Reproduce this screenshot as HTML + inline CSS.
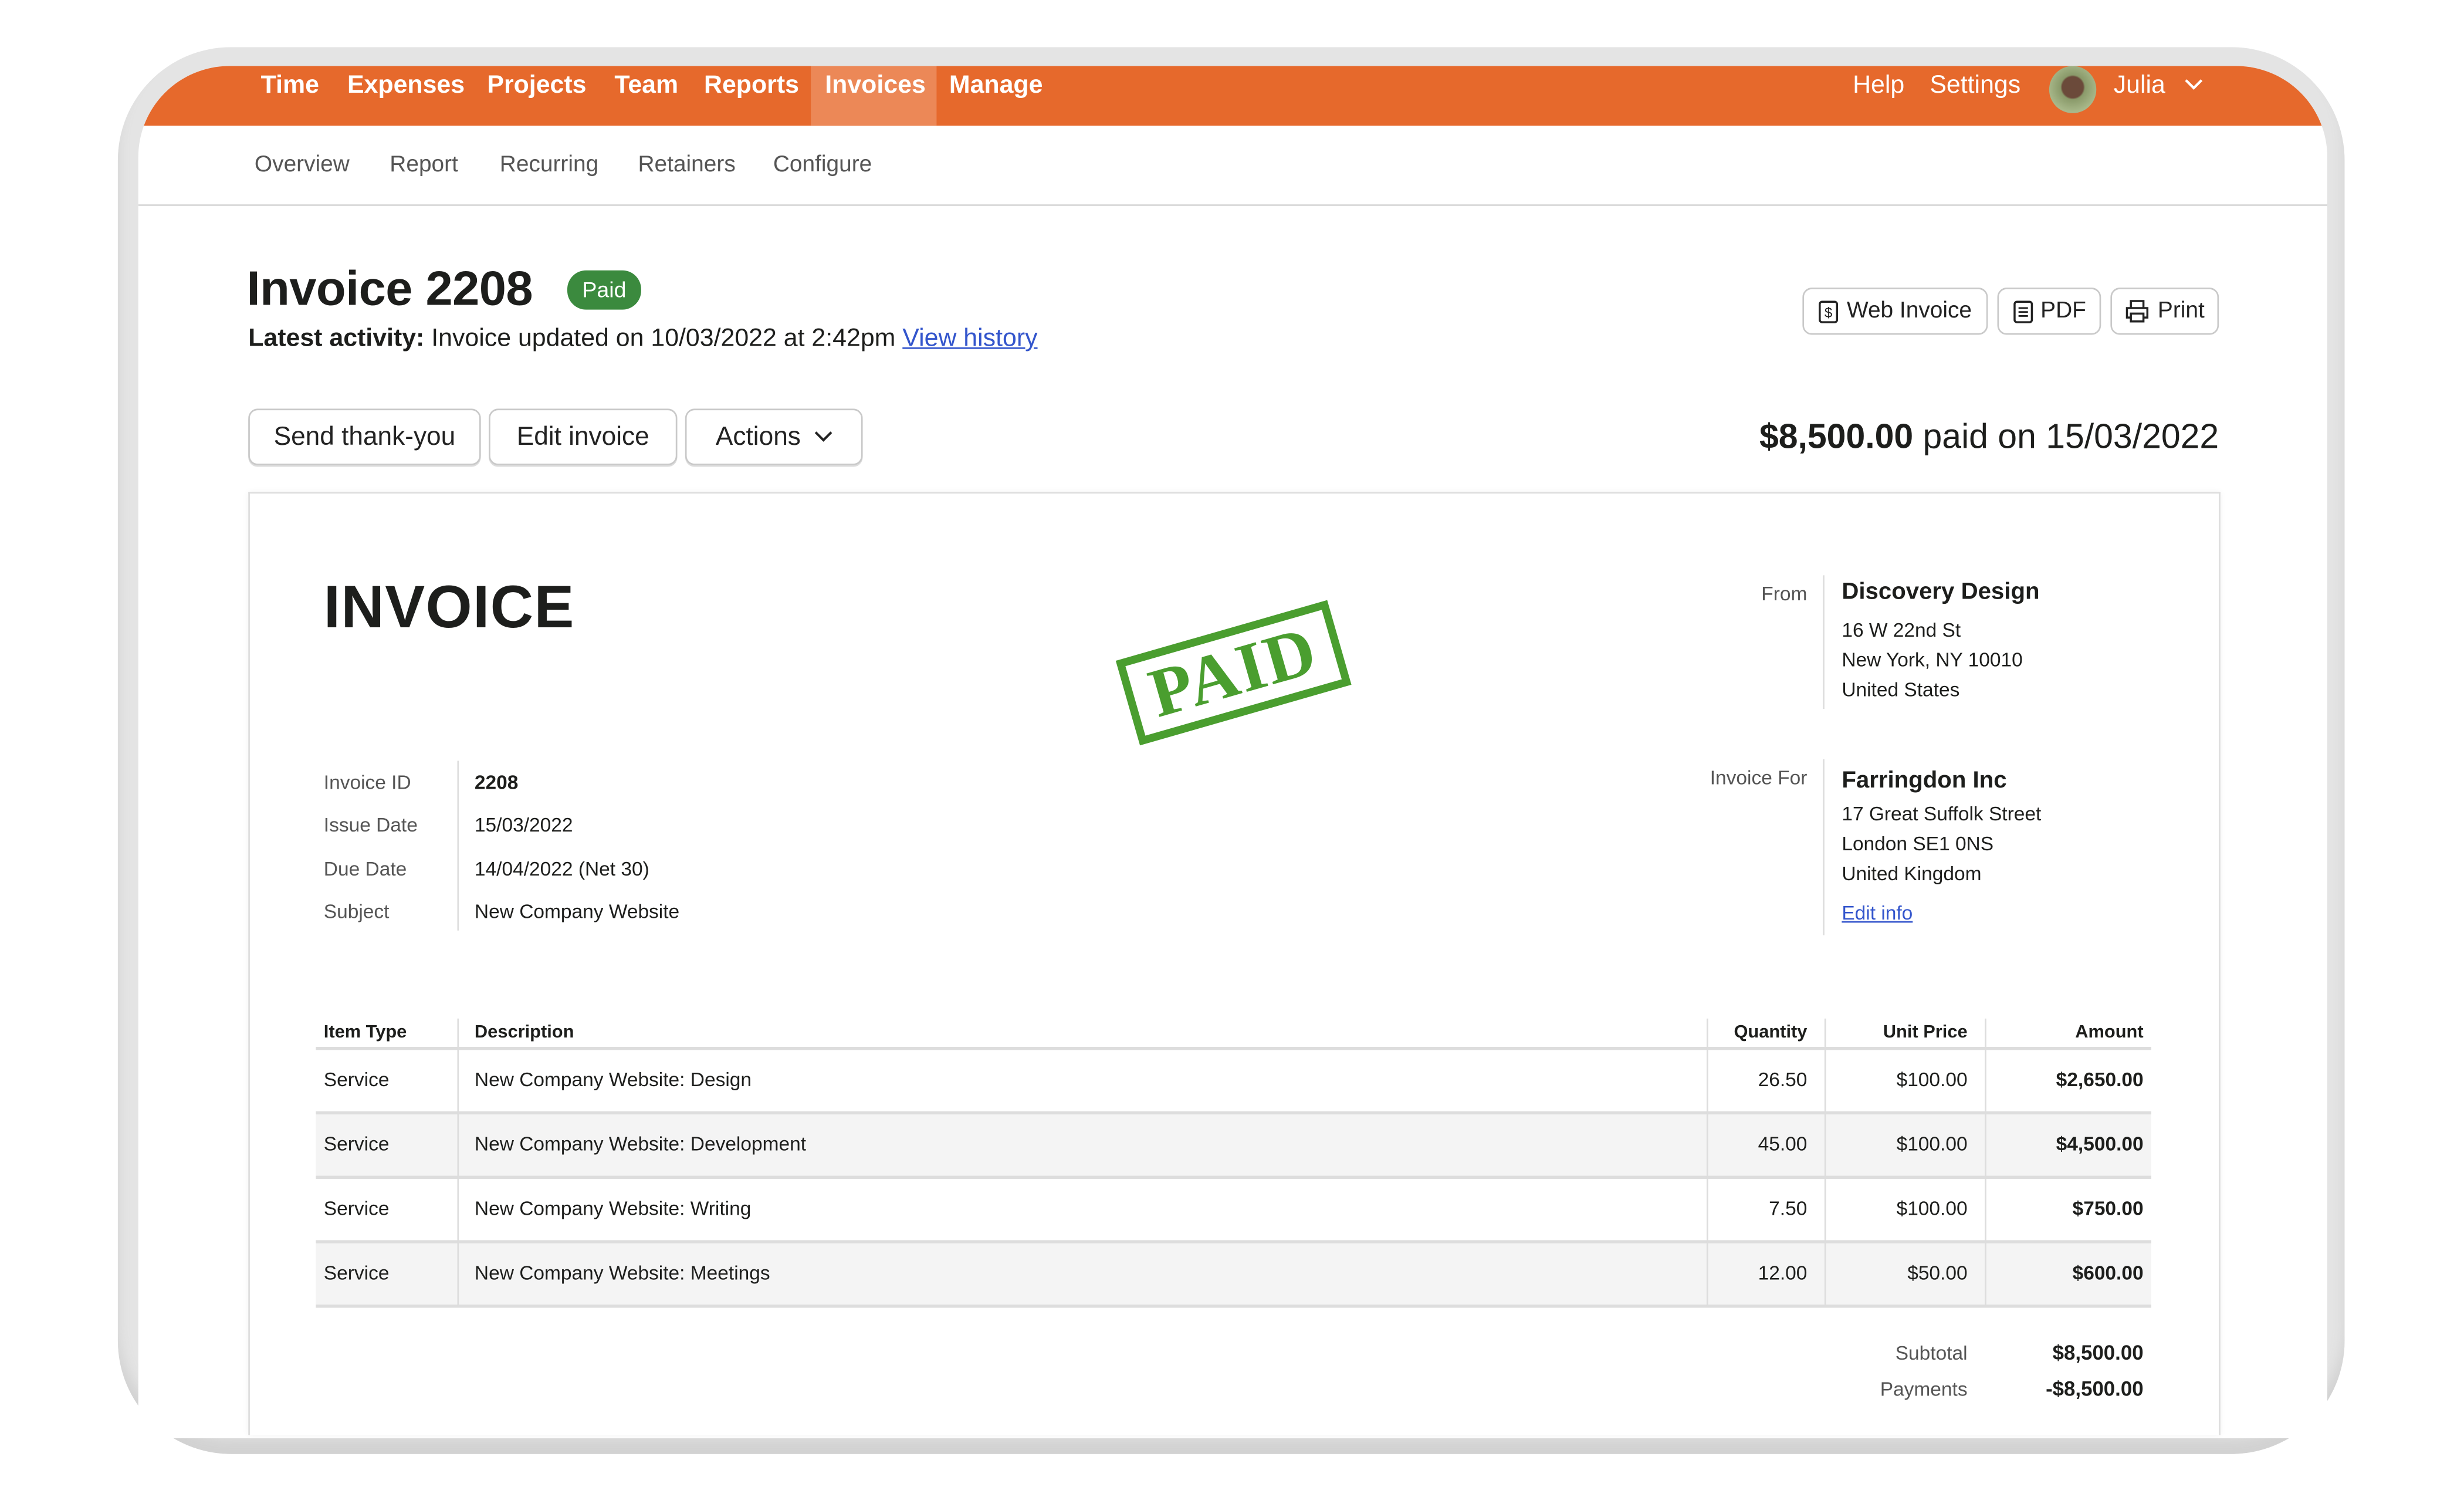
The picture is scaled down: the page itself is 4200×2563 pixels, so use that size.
<!DOCTYPE html>
<html><head><meta charset="utf-8"><style>
*{margin:0;padding:0;box-sizing:border-box}
html,body{width:4200px;height:2562px;overflow:hidden;background:#fff}
#c{position:absolute;left:0;top:0;width:1568px;height:957px;transform:scale(2.6786);transform-origin:0 0;font-family:"Liberation Sans",sans-serif;color:#1d1e1c}
.a{position:absolute;white-space:nowrap}
.bez{position:absolute;left:75px;top:30px;width:1417px;height:895px;border-radius:72px;background:#e4e4e4;box-shadow:inset 0 -10px 8px #d2d2d2}
.scr{position:absolute;left:88px;top:42px;width:1393px;height:873px;border-radius:58px 58px 8px 8px;background:#fff;overflow:hidden}
.hdr{position:absolute;left:0;top:0;width:1393px;height:38px;background:#e6692c}
.nav{position:absolute;top:3px;color:#fff;font-size:16px;font-weight:bold;line-height:20px}
.sub{position:absolute;top:55px;color:#555;font-size:14.5px}
.btn{position:absolute;border:1px solid #c9c9c9;border-radius:6px;background:#fff;font-size:16.5px;color:#222;display:flex;align-items:center;justify-content:center;box-shadow:0 1px 0 #ddd}
.sb{position:absolute;border:1px solid #c9c9c9;border-radius:6px;background:#fff;font-size:14.5px;color:#222;display:flex;align-items:center;justify-content:center;gap:5px}
.lbl{font-size:12.5px;color:#555}
.val{font-size:12.5px;color:#1d1e1c}
.vl{position:absolute;width:1px;background:#ddd}
</style></head><body><div id="c">
<div class="bez"></div>
<div class="scr">
 <div class="hdr">
  <div style="position:absolute;left:428px;top:0;width:80px;height:38px;background:#ec8857"></div>
  <div class="nav" style="left:78px">Time</div>
  <div class="nav" style="left:133px">Expenses</div>
  <div class="nav" style="left:222px">Projects</div>
  <div class="nav" style="left:303px">Team</div>
  <div class="nav" style="left:360px">Reports</div>
  <div class="nav" style="left:437px">Invoices</div>
  <div class="nav" style="left:516px">Manage</div>
  <div class="nav" style="left:1091px;font-weight:normal">Help</div>
  <div class="nav" style="left:1140px;font-weight:normal">Settings</div>
  <div style="position:absolute;left:1216px;top:0px;width:30px;height:30px;border-radius:50%;background:radial-gradient(circle at 50% 45%,#6b4a3a 0 30%,#8a9a6a 35%,#a8b88a 70%,#9cb0c0 100%)"></div>
  <div class="nav" style="left:1257px;font-weight:normal">Julia</div>
  <svg class="a" style="left:1302px;top:8px" width="12" height="8" viewBox="0 0 12 8"><path d="M1 1l5 5 5-5" fill="none" stroke="#fff" stroke-width="1.6"/></svg>
 </div>
 <div class="sub" style="left:74px">Overview</div>
 <div class="sub" style="left:160px">Report</div>
 <div class="sub" style="left:230px">Recurring</div>
 <div class="sub" style="left:318px">Retainers</div>
 <div class="sub" style="left:404px">Configure</div>
 <div style="position:absolute;left:0;top:88px;width:1393px;height:1px;background:#d8d8d8"></div>
</div>
<div class="a" style="left:157px;top:166px;font-size:31px;font-weight:bold;letter-spacing:-0.2px">Invoice 2208</div>
<div class="a" style="left:361px;top:172px;width:47px;height:25px;border-radius:12px;background:#3b8a3e;color:#fff;font-size:14px;line-height:25px;text-align:center">Paid</div>
<div class="a" style="left:158px;top:207px;font-size:16px"><b>Latest activity:</b> Invoice updated on 10/03/2022 at 2:42pm <span style="color:#3355cc;text-decoration:underline">View history</span></div>
<div class="sb" style="left:1147px;top:183px;width:118px;height:30px"><svg width="13" height="15" viewBox="0 0 13 15"><rect x="1" y="1" width="11" height="13" rx="1.5" fill="none" stroke="#222" stroke-width="1.3"/><text x="6.5" y="11" font-size="9" text-anchor="middle" font-family="Liberation Sans" fill="#222">$</text></svg>Web Invoice</div>
<div class="sb" style="left:1271px;top:183px;width:66px;height:30px"><svg width="13" height="15" viewBox="0 0 13 15"><rect x="1" y="1" width="11" height="13" rx="1.5" fill="none" stroke="#222" stroke-width="1.3"/><path d="M3.5 5h6M3.5 7.5h6M3.5 10h6" stroke="#222" stroke-width="1.1"/></svg>PDF</div>
<div class="sb" style="left:1343px;top:183px;width:69px;height:30px"><svg width="16" height="16" viewBox="0 0 16 16"><path d="M4 6V1.5h8V6M4 12H1.5V6h13v6H12M4 9.5h8v5H4z" fill="none" stroke="#222" stroke-width="1.3"/></svg>Print</div>
<div class="btn" style="left:158px;top:260px;width:148px;height:36px">Send thank-you</div>
<div class="btn" style="left:311px;top:260px;width:120px;height:36px">Edit invoice</div>
<div class="btn" style="left:436px;top:260px;width:113px;height:36px">Actions <svg style="margin-left:8px" width="12" height="8" viewBox="0 0 12 8"><path d="M1 1l5 5 5-5" fill="none" stroke="#222" stroke-width="1.5"/></svg></div>
<div class="a" style="right:156px;top:265px;font-size:22px"><b style="font-weight:600">$8,500.00</b> paid on 15/03/2022</div>
<div class="a" style="left:158px;top:313px;width:1255px;height:600px;border:1px solid #ddd;border-bottom:none;box-shadow:0 0 4px rgba(0,0,0,.05)"></div>
<div class="a" style="left:206px;top:366px;font-size:38px;font-weight:bold;letter-spacing:0.5px">INVOICE</div>
<div class="a" style="left:715px;top:400px;width:140px;height:56px;border:5px solid #4a9e2f;transform:rotate(-16deg);color:#4a9e2f;font-family:'Liberation Serif',serif;font-weight:bold;font-size:44px;line-height:46px;text-align:center;letter-spacing:1px">PAID</div>
<div class="a lbl" style="right:418px;top:371px">From</div>
<div class="vl" style="left:1160px;top:366px;height:85px"></div>
<div class="a" style="left:1172px;top:368px;font-size:15px;font-weight:bold">Discovery Design</div>
<div class="a val" style="left:1172px;top:392px;line-height:19px">16 W 22nd St<br>New York, NY 10010<br>United States</div>
<div class="a lbl" style="right:418px;top:488px">Invoice For</div>
<div class="vl" style="left:1160px;top:483px;height:112px"></div>
<div class="a" style="left:1172px;top:488px;font-size:15px;font-weight:bold">Farringdon Inc</div>
<div class="a val" style="left:1172px;top:509px;line-height:19px">17 Great Suffolk Street<br>London SE1 0NS<br>United Kingdom</div>
<div class="a" style="left:1172px;top:574px;font-size:12.5px;color:#3355cc;text-decoration:underline">Edit info</div>
<div class="a lbl" style="left:206px;top:485px;line-height:27.4px">Invoice ID<br>Issue Date<br>Due Date<br>Subject</div>
<div class="vl" style="left:291px;top:484px;height:108px"></div>
<div class="a val" style="left:302px;top:485px;line-height:27.4px"><b>2208</b><br>15/03/2022<br>14/04/2022 (Net 30)<br>New Company Website</div>
<div class="a" style="left:206px;top:651px;font-size:11.5px;font-weight:bold">Item Type</div>
<div class="a" style="left:302px;top:651px;font-size:11.5px;font-weight:bold">Description</div>
<div class="a" style="right:418px;top:651px;font-size:11.5px;font-weight:bold">Quantity</div>
<div class="a" style="right:316px;top:651px;font-size:11.5px;font-weight:bold">Unit Price</div>
<div class="a" style="right:204px;top:651px;font-size:11.5px;font-weight:bold">Amount</div>
<div class="a" style="left:201px;top:666px;width:1168px;height:2px;background:#ddd"></div>
<div class="a" style="left:201px;top:708px;width:1168px;height:41px;background:#f4f4f4"></div>
<div class="a" style="left:201px;top:790px;width:1168px;height:41px;background:#f4f4f4"></div>
<div class="a" style="left:201px;top:707px;width:1168px;height:2px;background:#ddd"></div>
<div class="a" style="left:201px;top:748px;width:1168px;height:2px;background:#ddd"></div>
<div class="a" style="left:201px;top:789px;width:1168px;height:2px;background:#ddd"></div>
<div class="a" style="left:201px;top:830px;width:1168px;height:2px;background:#ddd"></div>
<div class="vl" style="left:291px;top:648px;height:183px"></div>
<div class="vl" style="left:1086px;top:648px;height:183px"></div>
<div class="vl" style="left:1161px;top:648px;height:183px"></div>
<div class="vl" style="left:1263px;top:648px;height:183px"></div>
<div class="a val" style="left:206px;top:667px;line-height:41px">Service<br>Service<br>Service<br>Service</div>
<div class="a val" style="left:302px;top:667px;line-height:41px">New Company Website: Design<br>New Company Website: Development<br>New Company Website: Writing<br>New Company Website: Meetings</div>
<div class="a val" style="right:418px;top:667px;line-height:41px;text-align:right">26.50<br>45.00<br>7.50<br>12.00</div>
<div class="a val" style="right:316px;top:667px;line-height:41px;text-align:right">$100.00<br>$100.00<br>$100.00<br>$50.00</div>
<div class="a val" style="right:204px;top:667px;line-height:41px;text-align:right;font-weight:bold">$2,650.00<br>$4,500.00<br>$750.00<br>$600.00</div>
<div class="a lbl" style="right:316px;top:850px;line-height:23px;text-align:right">Subtotal<br>Payments</div>
<div class="a" style="right:204px;top:849px;line-height:23px;text-align:right;font-size:13px;font-weight:bold">$8,500.00<br>-$8,500.00</div>
</div></body></html>
